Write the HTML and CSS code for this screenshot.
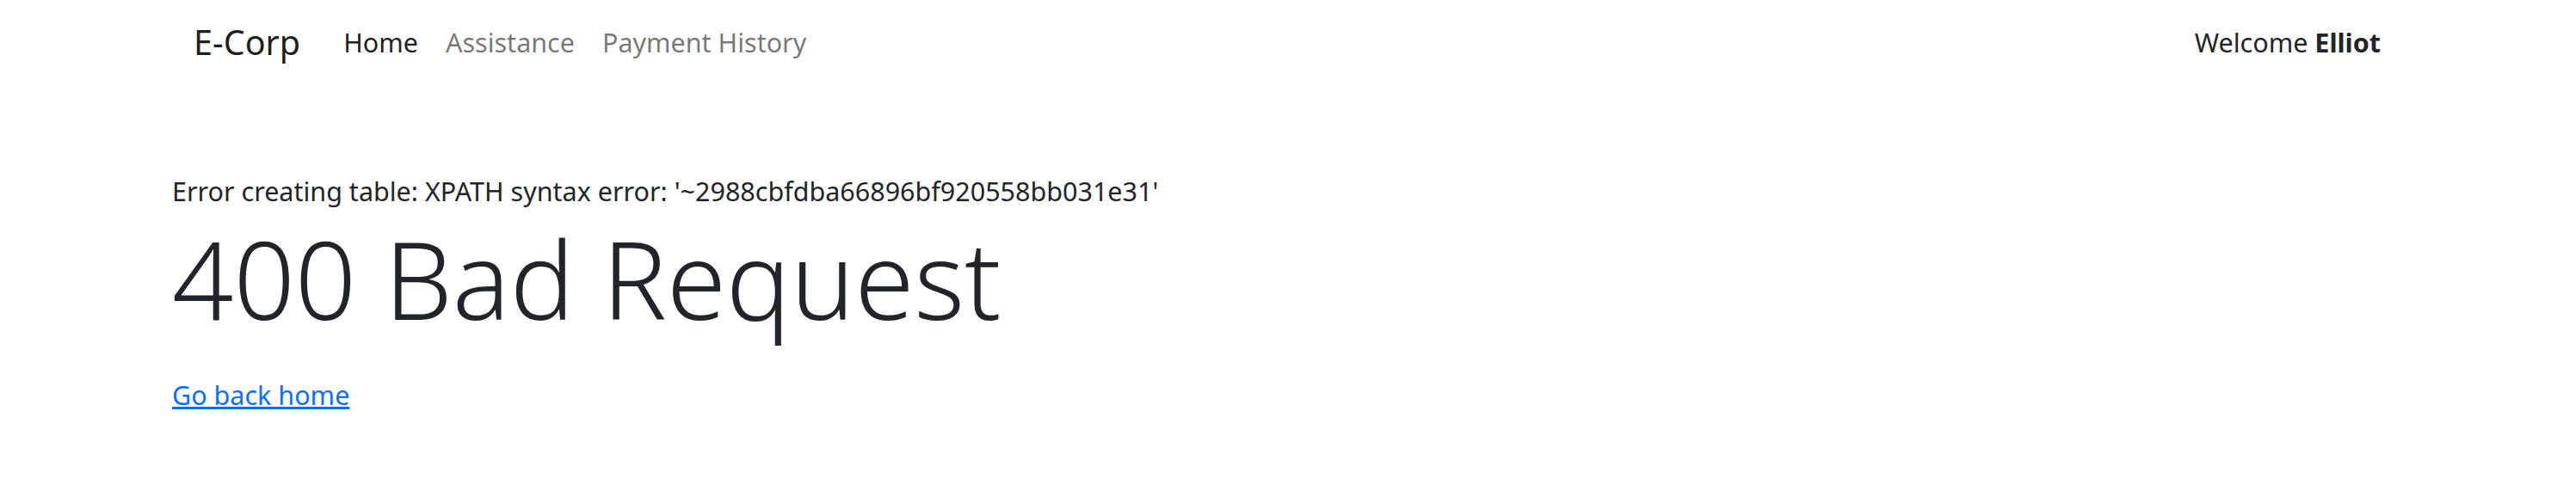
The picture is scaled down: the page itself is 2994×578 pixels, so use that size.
FILE: index.html
```html
<!DOCTYPE html>
<html lang="en">
<head>
<meta charset="utf-8">
<title>E-Corp</title>
<link rel="stylesheet" href="styles.css">
</head>
<body>
<nav class="navbar">
  <a class="brand" href="#">E-Corp</a>
  <ul class="nav-links">
    <li><a class="nav-link active" href="#">Home</a></li>
    <li><a class="nav-link" href="#">Assistance</a></li>
    <li><a class="nav-link" href="#">Payment History</a></li>
  </ul>
  <div class="welcome">Welcome <b>Elliot</b></div>
</nav>
<main class="content">
  <p class="error">Error creating table: XPATH syntax error: '~2988cbfdba66896bf920558bb031e31'</p>
  <h1 class="display">400 Bad Request</h1>
  <a class="home-link" href="#">Go back home</a>
</main>
</body>
</html>
```

FILE: styles.css
```css
html, body {
  margin: 0;
  padding: 0;
  background: #ffffff;
}
body {
  font-family: "Noto Sans", "Open Sans", sans-serif;
  font-size: 30.5px;
  line-height: 1.5;
  color: #212529;
}
.navbar {
  display: flex;
  align-items: center;
  height: 100px;
  padding: 0 227px 0 225px;
}
.brand {
  font-size: 39.5px;
  color: rgba(0, 0, 0, 0.9);
  text-decoration: none;
  margin-right: 50px;
}
.nav-links {
  display: flex;
  list-style: none;
  margin: 0;
  padding: 0;
  flex: 1;
}
.nav-link {
  display: block;
  padding: 0 16px;
  color: rgba(0, 0, 0, 0.55);
  text-decoration: none;
}
.nav-links li:first-child .nav-link {
  padding-left: 0;
}
.nav-link.active {
  color: rgba(0, 0, 0, 0.9);
}
.welcome b {
  font-weight: 700;
}
.content {
  display: flex;
  flex-direction: column;
  align-items: flex-start;
  padding: 100px 0 0 200px;
}
.error {
  margin: 0;
}
.display {
  margin: 3px 0 0 0;
  font-size: 125px;
  font-weight: 300;
  line-height: 1.2;
}
.home-link {
  margin-top: 38px;
  color: #0d6efd;
  text-decoration: underline;
}
```
